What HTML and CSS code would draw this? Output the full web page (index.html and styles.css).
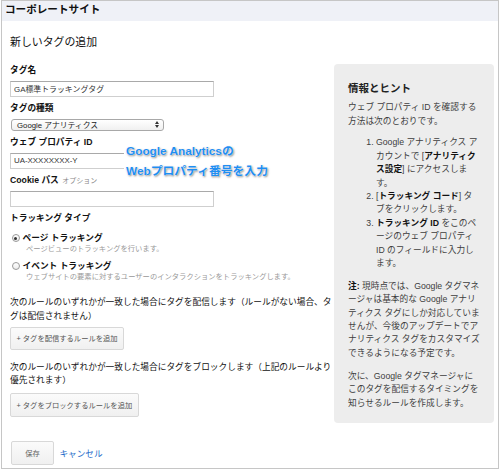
FILE: index.html
```html
<!DOCTYPE html>
<html lang="ja">
<head>
<meta charset="utf-8">
<title>新しいタグの追加</title>
<link rel="stylesheet" href="styles.css">
</head>
<body>
<div class="page">
  <header class="topbar">コーポレートサイト</header>
  <div class="main">
    <div class="form">
      <h1 class="title">新しいタグの追加</h1>

      <div class="field">
        <div class="label">タグ名</div>
        <input class="text-input" type="text" value="GA標準トラッキングタグ" readonly>
      </div>

      <div class="field">
        <div class="label">タグの種類</div>
        <div class="select">
          <span>Google アナリティクス</span>
          <svg class="select-arrows" width="4" height="7" viewBox="0 0 4 7"><path d="M0 3 L2 0 L4 3 Z M0 4 L2 7 L4 4 Z" fill="#333"/></svg>
        </div>
      </div>

      <div class="field">
        <div class="label">ウェブ プロパティ ID</div>
        <input class="text-input" type="text" value="UA-XXXXXXXX-Y" readonly>
      </div>

      <div class="field">
        <div class="label">Cookie パス <span class="optional">オプション</span></div>
        <input class="text-input" type="text" value="" readonly>
      </div>

      <div class="field">
        <div class="label">トラッキング タイプ</div>
      </div>

      <div class="radios">
        <div class="option">
          <div class="radio-row"><span class="radio checked"></span>ページ トラッキング</div>
          <div class="radio-desc">ページビューのトラッキングを行います。</div>
        </div>
        <div class="option">
          <div class="radio-row"><span class="radio"></span>イベント トラッキング</div>
          <div class="radio-desc">ウェブサイトの要素に対するユーザーのインタラクションをトラッキングします。</div>
        </div>
      </div>

      <p class="rule-text">次のルールのいずれかが一致した場合にタグを配信します（ルールがない場合、タグは配信されません）</p>
      <button class="btn">+ タグを配信するルールを追加</button>

      <p class="rule-text rule-text-second">次のルールのいずれかが一致した場合にタグをブロックします（上記のルールより優先されます）</p>
      <button class="btn btn-second">+ タグをブロックするルールを追加</button>

      <div class="actions">
        <button class="btn btn-save">保存</button>
        <a class="cancel" href="#">キャンセル</a>
      </div>

      <div class="annotation">Google Analyticsの<br>Webプロパティ番号を入力</div>
    </div>

    <aside class="hints">
      <h2>情報とヒント</h2>
      <p class="hints-intro">ウェブ プロパティ ID を確認する方法は次のとおりです。</p>
      <ol>
        <li>Google アナリティクス アカウントで [<b>アナリティクス設定</b>] にアクセスします。</li>
        <li>[<b>トラッキング コード</b>] タブをクリックします。</li>
        <li><b>トラッキング ID</b> をこのページのウェブ プロパティ ID のフィールドに入力します。</li>
      </ol>
      <p><b>注:</b> 現時点では、Google タグマネージャは基本的な Google アナリティクス タグにしか対応していませんが、今後のアップデートでアナリティクス タグをカスタマイズできるようになる予定です。</p>
      <p>次に、Google タグマネージャにこのタグを配信するタイミングを知らせるルールを作成します。</p>
    </aside>
  </div>
</div>
</body>
</html>
```

FILE: styles.css
```css
body {
  margin: 0;
  font-family: "Liberation Sans", "Noto Sans CJK JP", sans-serif;
  color: #111;
  background: #fff;
}

.page {
  margin-left: 1px;
  width: 498px;
  height: 469px;
  box-sizing: border-box;
  border: 1px solid #c6c6c6;
  overflow: hidden;
}

.topbar {
  height: 20px;
  line-height: 17px;
  background: #eff1f7;
  padding-left: 3px;
  font-size: 10.6px;
  font-weight: bold;
  color: #111;
}

.main {
  display: flex;
  align-items: flex-start;
}

.form {
  position: relative;
  flex: none;
  width: 324px;
  padding: 13px 0 0 8px;
}

.title {
  margin: 0 0 14px;
  font-size: 10.9px;
  font-weight: normal;
  line-height: 16px;
  color: #111;
}

.field + .field {
  margin-top: 5px;
}

.label {
  font-size: 8.7px;
  font-weight: bold;
  line-height: 13.4px;
  color: #111;
}

.optional {
  font-size: 7px;
  font-weight: normal;
  color: #888;
  margin-left: 1px;
}

.text-input {
  display: block;
  margin: 3.5px 0 0;
  width: 204px;
  height: 16px;
  box-sizing: border-box;
  border: 1px solid #cfcfcf;
  border-top-color: #a9a9a9;
  border-radius: 0;
  padding: 0 0 0 3px;
  font: 7.9px "Liberation Sans", "Noto Sans CJK JP", sans-serif;
  color: #333;
  background: #fff;
  outline: none;
}

.select {
  margin: 3.5px 0 2px 1px;
  width: 153px;
  height: 12px;
  box-sizing: border-box;
  border: 1px solid #a8a8a8;
  border-radius: 3px;
  display: flex;
  align-items: center;
  justify-content: space-between;
  padding: 0 4px 0 5px;
  font-size: 7.8px;
  color: #222;
  background: linear-gradient(#ffffff, #f0f0f0);
}

.select-arrows {
  display: block;
}

.radios {
  margin-top: 7px;
}

.option + .option {
  margin-top: 6.5px;
}

.radio-row {
  display: flex;
  align-items: center;
  font-size: 8.7px;
  font-weight: bold;
  line-height: 12px;
  color: #111;
}

.radio {
  flex: none;
  width: 8px;
  height: 8px;
  box-sizing: border-box;
  border: 1px solid #9a9a9a;
  border-radius: 50%;
  margin: 0 3px 0 1.5px;
  background: linear-gradient(#fff, #ececec);
  display: flex;
  align-items: center;
  justify-content: center;
}

.radio.checked::after {
  content: "";
  width: 3px;
  height: 3px;
  border-radius: 50%;
  background: #333;
}

.radio-desc {
  font-size: 7.3px;
  line-height: 9px;
  color: #999;
  padding-left: 16px;
  white-space: nowrap;
}

.rule-text {
  margin: 15.6px 0 0;
  font-size: 8.7px;
  line-height: 13.4px;
  color: #111;
}

.rule-text-second {
  margin-top: 11px;
}

.btn {
  display: block;
  margin-top: 3.9px;
  height: 23px;
  padding: 0 5.5px;
  box-sizing: border-box;
  border: 1px solid #d8d8d8;
  border-radius: 2px;
  background: linear-gradient(#fbfbfb, #f0f0f0);
  font: 7.3px "Liberation Sans", "Noto Sans CJK JP", sans-serif;
  color: #555;
}

.btn-second {
  margin-top: 5px;
  height: 24px;
}

.actions {
  margin-top: 24.2px;
  display: flex;
  align-items: center;
  gap: 5.5px;
}

.btn-save {
  margin: 0 0 0 1px;
  height: 24px;
  width: 43px;
  padding: 0;
  color: #666;
}

.cancel {
  color: #1b6ac9;
  font-size: 8.6px;
  text-decoration: none;
}

.annotation {
  position: absolute;
  left: 122px;
  top: 121px;
  padding: 0 3px 0 2px;
  background: #fff;
  font-size: 11.8px;
  font-weight: bold;
  line-height: 19.5px;
  color: #1f8ef1;
  text-shadow: 0 0 1px #fff, 0 0 2px #fff, 1px 1px 2px rgba(0, 0, 0, 0.55);
  white-space: nowrap;
}

.hints {
  flex: none;
  width: 160px;
  margin-top: 43px;
  box-sizing: border-box;
  padding: 16.5px 14px 13.2px 14px;
  background: #ededed;
  border-radius: 4px;
  font-size: 8.7px;
  line-height: 13.4px;
  color: #3d3d3d;
  line-break: normal;
}

.hints h2 {
  margin: 0;
  font-size: 10.5px;
  line-height: 14px;
  color: #222;
}

.hints b {
  color: #111;
}

.hints p {
  margin: 9.5px 0 0;
}

.hints .hints-intro {
  margin-top: 6.8px;
}

.hints ol {
  margin: 8.2px 0 0;
  padding: 0 0 0 28px;
}
```
